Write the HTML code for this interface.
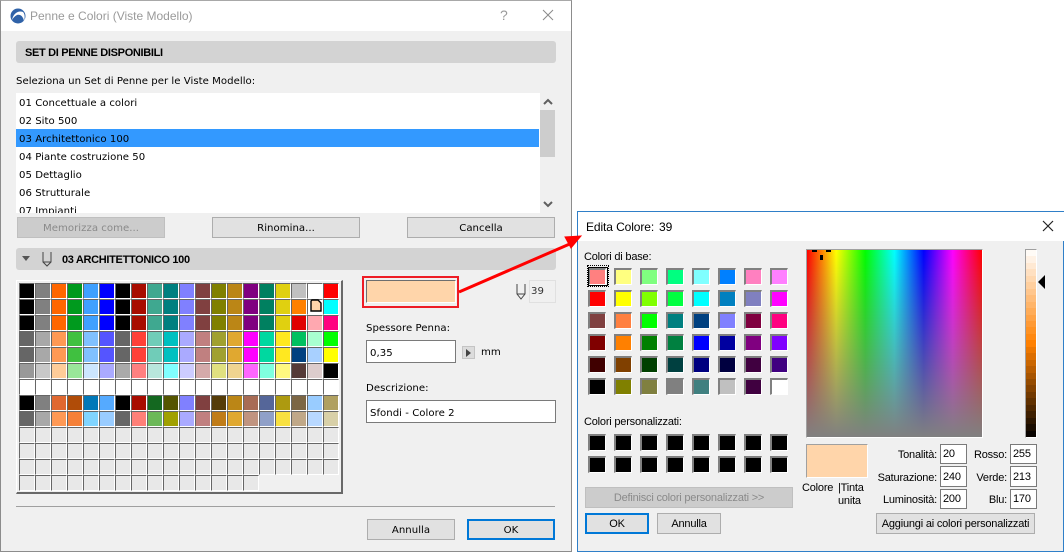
<!DOCTYPE html>
<html><head><meta charset="utf-8">
<style>
html,body{margin:0;padding:0;background:#fff}
#r{position:relative;width:1064px;height:552px;overflow:hidden;background:#fff;font:11px/16px "Liberation Sans",sans-serif;letter-spacing:-.2px;color:#000}
#r div,#r span.t{position:absolute;white-space:nowrap;box-sizing:border-box}
.l{font-family:"DejaVu Sans","Liberation Sans",sans-serif;font-size:10.15px;letter-spacing:.03px;margin-top:1px}
.b{font-family:"Liberation Sans",sans-serif;font-weight:bold;font-size:11px;letter-spacing:-.32px;margin-top:1px}
.btn{background:#e1e1e1;border:1px solid #adadad;text-align:center;line-height:20px}
.btn.l{line-height:21px;margin-top:0}
.ok{border:2px solid #0078d7;line-height:18px}
.btn.l.ok{line-height:19px}
.in{background:#fff;border:1px solid #7a7a7a}
.in.l{margin-top:0}
.hd{background:#d3d3d3;border-radius:3px}
.cell{width:16px;height:16px;border:1px solid #fff;border-top-color:#666;border-left-color:#666}
.bs{width:18px;height:17px;border:2px solid #808080;border-right-color:#fff;border-bottom-color:#fff;border-right-width:1px;border-bottom-width:1px}
.lab{text-align:right;width:100px;color:#000}
</style></head><body>
<div id="r">
<!-- left dialog -->
<div style="left:0;top:0;width:572px;height:552px;background:#f0f0f0;border:1px solid #8c8c8c;border-top-color:#a8a8a8"></div>
<div style="left:1px;top:1px;width:570px;height:30px;background:#fff"></div>
<svg style="position:absolute;left:10px;top:8px" width="16" height="16" viewBox="0 0 16 16"><circle cx="8" cy="8" r="7.5" fill="#2f62a8"/><path d="M2 12C3 6 8 2 13 4C15 6 15 10 14 13C13 8 10 6 7 7C5 8 3 10 2 12Z" fill="#fff"/></svg>
<div style="left:30px;top:8px;color:#9a9a9a;font-size:12px;letter-spacing:0">Penne e Colori (Viste Modello)</div>
<div style="left:500px;top:7px;color:#9a9a9a;font-size:14px;letter-spacing:0">?</div>
<svg style="position:absolute;left:542px;top:9px" width="12" height="12"><path d="M1 1L11 11M11 1L1 11" stroke="#8a8a8a" stroke-width="1" fill="none"/></svg>

<div class="hd" style="left:16px;top:41px;width:540px;height:22px"></div>
<div class="b" style="left:25px;top:44px">SET DI PENNE DISPONIBILI</div>
<div class="l" style="left:16px;top:73px">Seleziona un Set di Penne per le Viste Modello:</div>

<div style="left:16px;top:93px;width:524px;height:120px;background:#fff;overflow:hidden">
 <div style="left:0;top:36px;width:523px;height:18px;background:#3399ff"></div>
 <div class="l" style="left:3px;top:2px">01 Concettuale a colori</div>
 <div class="l" style="left:3px;top:20px">02 Sito 500</div>
 <div class="l" style="left:3px;top:38px">03 Architettonico 100</div>
 <div class="l" style="left:3px;top:56px">04 Piante costruzione 50</div>
 <div class="l" style="left:3px;top:74px">05 Dettaglio</div>
 <div class="l" style="left:3px;top:92px">06 Strutturale</div>
 <div class="l" style="left:3px;top:110px">07 Impianti</div>
</div>
<div style="left:540px;top:93px;width:16px;height:120px;background:#f0f0f0"></div>
<div style="left:540px;top:110px;width:15px;height:47px;background:#cdcdcd"></div>
<svg style="position:absolute;left:543px;top:98px" width="10" height="8"><path d="M1 6L5 2L9 6" stroke="#606060" stroke-width="2" fill="none"/></svg>
<svg style="position:absolute;left:543px;top:200px" width="10" height="8"><path d="M1 2L5 6L9 2" stroke="#606060" stroke-width="2" fill="none"/></svg>

<div class="btn l" style="left:17px;top:217px;width:148px;height:21px;background:#cccccc;border-color:#bfbfbf;color:#8a8a8a">Memorizza come...</div>
<div class="btn l" style="left:212px;top:217px;width:148px;height:21px">Rinomina...</div>
<div class="btn l" style="left:407px;top:217px;width:148px;height:21px">Cancella</div>

<div class="hd" style="left:16px;top:248px;width:540px;height:22px"></div>
<svg style="position:absolute;left:22px;top:256px" width="9" height="6"><path d="M0 0H8L4 5Z" fill="#555"/></svg>
<svg style="position:absolute;left:41px;top:251px" width="12" height="17"><path d="M2 1V11L6 15L10 11V1M2 11H10" stroke="#444" stroke-width="1" fill="none"/></svg>
<div class="b" style="left:62px;top:251px">03 ARCHITETTONICO 100</div>

<!-- pen grid -->
<div style="left:16px;top:280px;width:327px;height:214px;background:#f0f0f0;border:1px solid #fff;border-right:2px solid #696969;border-bottom:2px solid #696969"></div>
<div id="grid" style="left:0;top:0"></div>

<!-- swatch -->
<div style="left:362px;top:276px;width:97px;height:32px;border:2px solid #ee1c25;background:#f0f0f0"></div>
<div style="left:366px;top:280px;width:90px;height:23px;background:#ffd5aa;border:1px solid #6e6e6e;border-right-color:#fff;border-bottom-color:#fff"></div>
<svg style="position:absolute;left:515px;top:283px" width="12" height="18"><path d="M2 1V11L6 16L10 11V1M2 11H10" stroke="#444" stroke-width="1" fill="none"/></svg>
<div class="in l" style="left:529px;top:280px;width:27px;height:23px;border:1px solid #e0e0e0;background:#f0f0f0;padding:3px 0 0 1px;color:#333">39</div>

<div class="l" style="left:366px;top:320px">Spessore Penna:</div>
<div class="in l" style="left:366px;top:340px;width:90px;height:23px;padding:5px 0 0 3px">0,35</div>
<div style="left:462px;top:346px;width:13px;height:13px;background:#dcdcdc;border:1px solid #c4c4c4"></div>
<svg style="position:absolute;left:466px;top:349px" width="6" height="8"><path d="M0 0L5 4L0 8Z" fill="#444"/></svg>
<div class="l" style="left:481px;top:344px">mm</div>
<div class="l" style="left:366px;top:380px">Descrizione:</div>
<div class="in l" style="left:366px;top:400px;width:190px;height:23px;padding:5px 0 0 3px">Sfondi - Colore 2</div>

<div style="left:16px;top:506px;width:539px;height:1px;background:#a0a0a0"></div>
<div class="btn l" style="left:367px;top:519px;width:88px;height:21px">Annulla</div>
<div class="btn ok l" style="left:467px;top:519px;width:88px;height:21px">OK</div>

<!-- right dialog -->
<div style="left:577px;top:211px;width:487px;height:341px;background:#f0f0f0;border:1px solid #2f7fc8"></div>
<div style="left:578px;top:212px;width:486px;height:29px;background:#fff"></div>
<div style="left:586px;top:219px;font-size:12px;letter-spacing:-.1px">Edita Colore:</div>
<div style="left:659px;top:219px;font-size:12px;letter-spacing:0">39</div>
<svg style="position:absolute;left:1042px;top:220px" width="12" height="12"><path d="M1 1L11 11M11 1L1 11" stroke="#222" stroke-width="1.2" fill="none"/></svg>

<div style="left:584px;top:249px">Colori di base:</div>
<div style="left:584px;top:414px">Colori personalizzati:</div>
<div id="base" style="left:0;top:0"></div>
<div style="left:587px;top:265px;width:22px;height:22px;border:1px dotted #000"></div>
<div style="left:588px;top:267px;width:20px;height:19px;border:1px solid #000"></div>

<div style="left:806px;top:249px;width:177px;height:189px;border:1px solid #a0a0a0;border-right-color:#fff;border-bottom-color:#fff;background:linear-gradient(to bottom,rgba(128,128,128,0),#808080),linear-gradient(to right,#f00,#ff0 16.67%,#0f0 33.33%,#0ff 50%,#00f 66.67%,#f0f 83.33%,#f00)"></div>
<div style="left:812px;top:250px;width:5px;height:2px;background:#000"></div>
<div style="left:826px;top:250px;width:5px;height:2px;background:#000"></div>
<div style="left:820px;top:255px;width:3px;height:5px;background:#000"></div>
<div id="lum" style="left:1025px;top:249px;width:12px;height:189px;border:1px solid #a0a0a0;border-right-color:#fff;border-bottom-color:#fff;overflow:hidden;background:#000"></div>
<svg style="position:absolute;left:1038px;top:275px" width="8" height="14"><path d="M7 0V14L0 7Z" fill="#000"/></svg>

<div style="left:806px;top:444px;width:62px;height:34px;background:#ffd5aa;border:1px solid #a0a0a0;border-right-color:#fff;border-bottom-color:#fff"></div>
<div style="left:802px;top:480px">Colore</div>
<div style="left:838px;top:480px">|Tinta</div>
<div style="left:838px;top:493px">unita</div>

<div class="lab" style="left:837px;top:447px">Tonalità:</div>
<div class="lab" style="left:837px;top:470px">Saturazione:</div>
<div class="lab" style="left:837px;top:492px">Luminosità:</div>
<div class="lab" style="left:907px;top:447px">Rosso:</div>
<div class="lab" style="left:907px;top:470px">Verde:</div>
<div class="lab" style="left:907px;top:492px">Blu:</div>
<div class="in" style="left:940px;top:444px;width:27px;height:20px;padding:1px 0 0 2px">20</div>
<div class="in" style="left:940px;top:466px;width:27px;height:21px;padding:2px 0 0 2px">240</div>
<div class="in" style="left:940px;top:489px;width:27px;height:20px;padding:1px 0 0 2px">200</div>
<div class="in" style="left:1010px;top:444px;width:27px;height:20px;padding:1px 0 0 2px">255</div>
<div class="in" style="left:1010px;top:466px;width:27px;height:21px;padding:2px 0 0 2px">213</div>
<div class="in" style="left:1010px;top:489px;width:27px;height:20px;padding:1px 0 0 2px">170</div>

<div class="btn" style="left:585px;top:487px;width:208px;height:21px;background:#cccccc;border-color:#bfbfbf;color:#8a8a8a">Definisci colori personalizzati &gt;&gt;</div>
<div class="btn ok" style="left:585px;top:513px;width:64px;height:21px">OK</div>
<div class="btn" style="left:657px;top:513px;width:64px;height:21px">Annulla</div>
<div class="btn" style="left:876px;top:513px;width:159px;height:21px">Aggiungi ai colori personalizzati</div>

<!-- arrow -->
<svg style="position:absolute;left:0;top:0" width="1064" height="552"><path d="M459 292L572 243" stroke="#f00" stroke-width="3" fill="none"/><path d="M581 236L565 237L571 248Z" fill="#f00" stroke="#f00"/></svg>
</div>
<script>
var K='#000000',G='#808080',D='#666666',A='#a8a8a8';
var r0=[K,G,'#ff6600','#009a1e','#3fa0ff','#0000ff',K,'#a80c00','#3fa890','#008080','#8080ff','#804040','#808000','#bb8616','#800080','#008060','#e0d010','#c0c0c0','#ffffff','#ff0000'];
var r1=r0.slice();r1[17]='#ff8000';r1[18]='#fff';r1[19]='#00ffff';
var r2=r0.slice();r2[17]='#e00000';r2[18]='#ffa8b0';r2[19]='#ff0080';
var r3=[D,A,'#ff9955','#40c040','#80c0ff','#5555ff',D,'#ff4038','#70ccb8','#00c0c0','#aaaaff','#c08080','#a0a030','#e0a830','#ff00ff','#00d8a0','#ffe820','#00c060','#a8ffd0','#00ff00'];
var r4=r3.slice();r4[17]='#004080';r4[18]='#a8d0ff';r4[19]='#ffff00';
var r5=['#999999','#c8c8c8','#ffcc99','#99e699','#cce6ff','#aaaaff','#aaaaaa','#ff8080','#b8e6dc','#80ffff','#ccccff','#d4aaaa','#e0e080','#f0d490','#ff66ff','#80ffdf','#fff880','#553a38','#dccccc','#000000'];
var W=[],E=[];for(var i=0;i<20;i++){W.push('#fff');E.push('#e8e8e8')}
var r7=[K,G,'#e06830','#b04c08','#0078b8','#55aaff',K,'#a80c00','#146820','#555500','#8080ff','#804040','#553c08','#bb8616','#a86c55','#556699','#ad9a10','#7c6644','#99ccff','#b0a060'];
var r8=[D,A,'#ff9955','#f58038','#80d4ff','#99ccff',D,'#ff8078','#6cb858','#a0a000','#aaaaff','#c08080','#c07c18','#e0a830','#c09480','#90a0c8','#f8e040','#c0a888','#b8d8ff','#d8d0a8'];
var rows=[r0,r1,r2,r3,r4,r5,W,r7,r8,E,E,E,E.slice(0,15)];
var h='';
rows.forEach(function(R,y){R.forEach(function(c,x){h+='<div class="cell" style="left:'+(19+16*x)+'px;top:'+(283+16*y)+'px;background:'+c+'"></div>';});});
h+='<svg style="position:absolute;left:309px;top:299px" width="14" height="14"><path d="M3 1H9L12 4V12H2V2Z" fill="#ffd5aa" stroke="#000" stroke-width="1.4"/></svg>';
document.getElementById('grid').innerHTML=h;
var b=[['#ff8080','#ffff80','#80ff80','#00ff80','#80ffff','#0080ff','#ff80c0','#ff80ff'],
['#ff0000','#ffff00','#80ff00','#00ff40','#00ffff','#0080c0','#8080c0','#ff00ff'],
['#804040','#ff8040','#00ff00','#008080','#004080','#8080ff','#800040','#ff0080'],
['#800000','#ff8000','#008000','#008040','#0000ff','#0000a0','#800080','#8000ff'],
['#400000','#804000','#004000','#004040','#000080','#000040','#400040','#400080'],
['#000000','#808000','#808040','#808080','#408080','#c0c0c0','#400040','#ffffff']];
h='';
b.forEach(function(R,y){R.forEach(function(c,x){h+='<div class="bs" style="left:'+(588+26*x)+'px;top:'+(268+22*y)+'px;background:'+c+'"></div>';});});
for(var y=0;y<2;y++)for(var x=0;x<8;x++)h+='<div class="bs" style="left:'+(588+26*x)+'px;top:'+(434+22*y)+'px;background:#000"></div>';
document.getElementById('base').innerHTML=h;
/* stepped luminosity bar */
h='';var n=29,bh=6.45;
function mix(a,b,t){return Math.round(a+(b-a)*t)}
for(var i=0;i<n;i++){var t=(i+.5)/n,c;
 if(t<.5){var u=t/.5;c=[255,mix(255,128,u),mix(255,0,u)]}
 else{var u=(t-.5)/.5;c=[mix(255,0,u),mix(128,0,u),0]}
 h+='<div style="left:0;top:'+(i*bh)+'px;width:11px;height:'+(bh+1)+'px;background:rgb('+c.join(',')+')"></div>';}
document.getElementById('lum').innerHTML=h;
</script>
</body></html>
